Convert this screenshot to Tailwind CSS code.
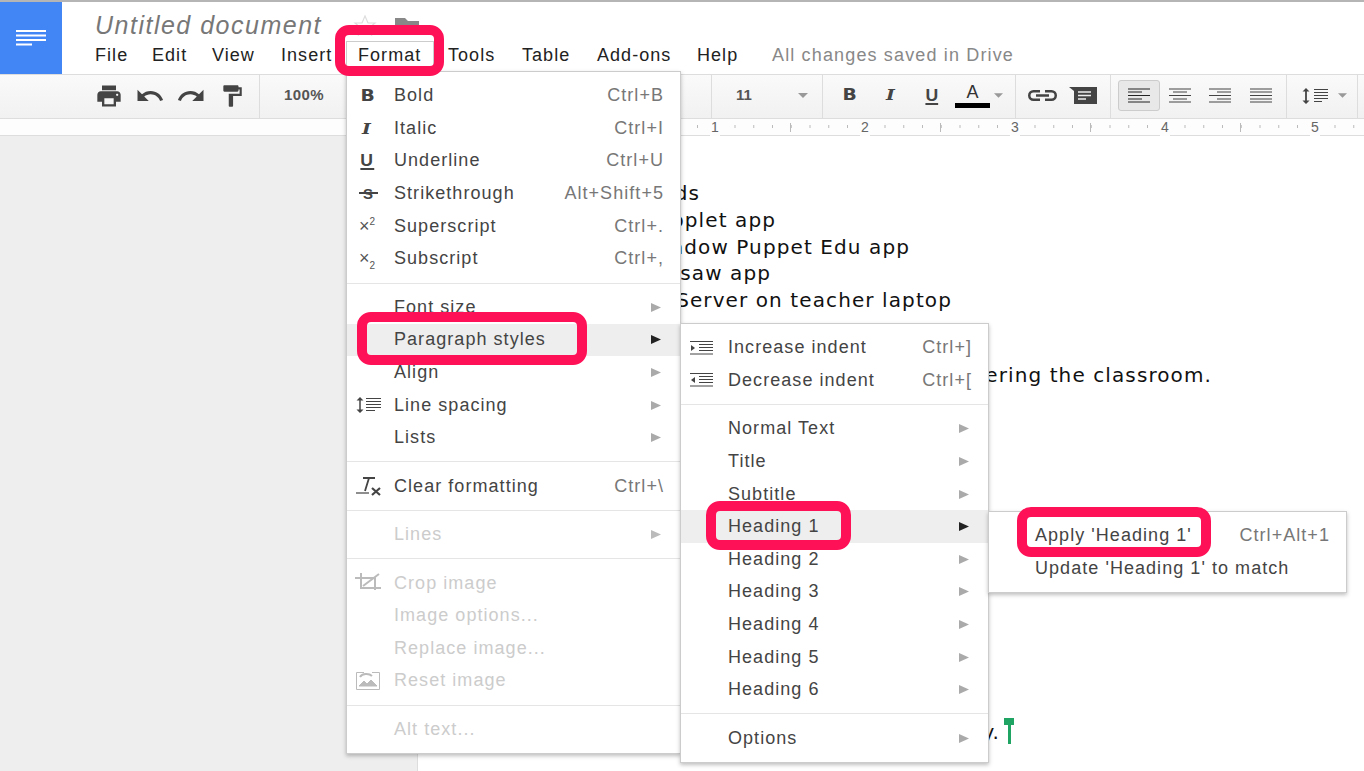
<!DOCTYPE html>
<html><head><meta charset="utf-8"><script src="https://cdn.jsdelivr.net/npm/@tailwindcss/browser@4"></script><title>Untitled document</title></head>
<body class="bg-white">
<div class="relative w-[1364px] h-[771px] overflow-hidden flex flex-col font-['Liberation_Sans',Arial,sans-serif] bg-white">
  <!-- header -->
  <header class="h-[75px] flex border-t-2 border-b border-t-[#b5b5b5] border-b-[#ddd] bg-white">
    <div class="w-[62px] bg-[#4285f4] flex items-center justify-center">
      <svg width="30" height="16" viewBox="0 0 30 16" fill="#fff"><rect width="30" height="2"/><rect y="4.500" width="30" height="2"/><rect y="9" width="30" height="2"/><rect y="13.500" width="16" height="2"/></svg>
    </div>
    <div class="flex-1 pl-[33px] flex flex-col">
      <div class="h-[38px] flex items-center pt-[10px]">
        <span class="w-[254px] text-[25px] italic tracking-[1.5px] text-[#777]">Untitled document</span>
        <svg class="ml-[4px]" width="24" height="24" viewBox="0 0 24 24" fill="none" stroke="#ddd" stroke-width="1.2"><path d="M12 2l3 7h7l-5.600 4.600 2 7.400L12 16.800 5.600 21l2-7.400L2 9h7z"/></svg>
        <svg class="ml-[17px]" width="26" height="22" viewBox="0 0 26 22" fill="#888"><path d="M1 3h10l3 3h11v14H1z"/></svg>
      </div>
      <nav class="flex items-center h-[30px] pt-[1px] text-[18px] tracking-[1.05px] text-[#222]">
        <span class="w-[57px]">File</span><span class="w-[60px]">Edit</span><span class="w-[69px]">View</span><span class="w-[65px]">Insert</span><span class="self-end w-[88px] h-[29px] mr-[14px] pl-[11px] pb-[2px] flex items-center bg-white border border-b-0 border-[#ccc]">Format</span><span class="w-[74px]">Tools</span><span class="w-[75px]">Table</span><span class="w-[100px]">Add-ons</span><span class="w-[75px]">Help</span><span class="text-[#888] tracking-[1.15px]">All changes saved in Drive</span>
      </nav>
    </div>
  </header>
  <!-- toolbar -->
  <div class="h-[44px] flex items-center border-b border-[#ddd] bg-gradient-to-b from-[#fafafa] to-[#f1f1f1] text-[#444]">
    <div class="w-[260px] h-full pl-[88px] pb-[2px] flex items-center border-r border-[#ddd]">
      <span class="w-[41px] flex justify-center"><svg width="28" height="28" viewBox="0 0 24 24" fill="#444"><path d="M19 8H5c-1.660 0-3 1.340-3 3v6h4v4h12v-4h4v-6c0-1.660-1.340-3-3-3zm-3 11H8v-5h8v5zm3-7c-.55 0-1-.45-1-1s.45-1 1-1 1 .45 1 1-.45 1-1 1zm-1-9H6v4h12V3z"/></svg></span>
      <span class="w-[41px] flex justify-center"><svg width="30" height="30" viewBox="0 0 24 24" fill="#444"><path d="M12.500 8c-2.650 0-5.050.99-6.900 2.600L2 7v9h9l-3.620-3.620c1.390-1.160 3.160-1.880 5.120-1.880 3.540 0 6.550 2.310 7.600 5.500l2.370-.78C21.080 11.030 17.150 8 12.500 8z"/></svg></span>
      <span class="w-[41px] flex justify-center"><svg width="30" height="30" viewBox="0 0 24 24" fill="#444" class="-scale-x-100"><path d="M12.500 8c-2.650 0-5.050.99-6.900 2.600L2 7v9h9l-3.620-3.620c1.390-1.160 3.160-1.880 5.120-1.880 3.540 0 6.550 2.310 7.600 5.500l2.370-.78C21.080 11.030 17.150 8 12.500 8z"/></svg></span>
      <span class="w-[41px] flex justify-center"><svg width="26" height="26" viewBox="0 0 24 24" fill="#444"><path d="M18 4V3c0-.55-.45-1-1-1H5c-.55 0-1 .45-1 1v4c0 .55.45 1 1 1h12c.55 0 1-.45 1-1V6h1v4H9v11c0 .55.45 1 1 1h2c.55 0 1-.45 1-1v-9h8V4h-3z"/></svg></span>
    </div>
    <div class="w-[452px] h-full pb-[2px] flex items-center border-r border-[#ddd]">
      <span class="ml-[24px] w-[65px] text-[15px] font-bold text-[#555] tracking-[0.4px]">100%</span>
      <svg class="ml-[295px]" width="10" height="5" viewBox="0 0 10 5" fill="#999"><path d="M0 0h10L5 5z"/></svg>
    </div>
    <div class="w-[111px] h-full pb-[2px] flex items-center border-r border-[#ddd]">
      <span class="ml-[24px] w-[62px] text-[15px] font-bold text-[#555]">11</span>
      <svg width="10" height="5" viewBox="0 0 10 5" fill="#999"><path d="M0 0h10L5 5z"/></svg>
    </div>
    <div class="w-[193px] h-full pl-[6px] pb-[2px] flex items-center border-r border-[#ddd]">
      <span class="w-[41px] flex justify-center"><span class="inline-block text-[15px] font-bold scale-x-125 font-['DejaVu_Sans',sans-serif]">B</span></span>
      <span class="w-[41px] flex justify-center"><span class="inline-block text-[15px] font-bold italic scale-x-125 font-['DejaVu_Serif',serif]">I</span></span>
      <span class="w-[41px] flex justify-center"><span class="inline-block text-[16px] font-bold underline underline-offset-2 decoration-2 scale-x-110">U</span></span>
      <span class="w-[41px] flex flex-col items-center"><span class="text-[18px] leading-[19px] text-[#333]">A</span><span class="w-[35px] h-[5px] mt-[1px] bg-black shrink-0"></span></span>
      <svg class="ml-[1px]" width="9" height="5" viewBox="0 0 10 5" fill="#999"><path d="M0 0h10L5 5z"/></svg>
    </div>
    <div class="w-[95px] h-full pl-[12px] pb-[2px] flex items-center border-r border-[#ddd]">
      <svg width="29" height="11" viewBox="0 0 29 11" fill="none" stroke="#444" stroke-width="2.500"><path d="M12 1.250H5.500a4.250 4.250 0 0 0 0 8.500H12M17 1.250h6.500a4.250 4.250 0 0 1 0 8.500H17M8 5.500h13"/></svg>
      <svg class="ml-[12px]" width="28" height="17" viewBox="0 0 28 17"><path d="M0 0h28v17H5V4z" fill="#444"/><path d="M9 5h13M9 8.500h13M9 12h8" stroke="#eee" stroke-width="1.600"/></svg>
    </div>
    <div class="w-[176px] h-full pl-[7px] pb-[2px] flex items-center border-r border-[#ddd]">
      <span class="w-[42px] h-[31px] flex items-center justify-center bg-[#e8e8e8] border border-[#ccc] rounded-[3px]">
        <svg width="22" height="15" viewBox="0 0 22 15" stroke="#222" stroke-width="1.200"><path d="M0 1h22M0 4h14M0 7.500h22M0 11h14M0 14h22"/></svg></span>
      <span class="w-[40px] flex justify-center"><svg width="22" height="15" viewBox="0 0 22 15" stroke="#444" stroke-width="1.200"><path d="M0 1h22M4 4h14M0 7.500h22M4 11h14M0 14h22"/></svg></span>
      <span class="w-[40px] flex justify-center"><svg width="22" height="15" viewBox="0 0 22 15" stroke="#444" stroke-width="1.200"><path d="M0 1h22M8 4h14M0 7.500h22M8 11h14M0 14h22"/></svg></span>
      <span class="w-[41px] flex justify-center"><svg width="22" height="15" viewBox="0 0 22 15" stroke="#444" stroke-width="1.200"><path d="M0 1h22M0 4h22M0 7.500h22M0 11h22M0 14h22"/></svg></span>
    </div>
    <div class="w-[71px] h-full pl-[15px] pb-[2px] flex items-center border-r border-[#ddd]">
      <svg width="27" height="16" viewBox="0 0 27 16" fill="none" stroke="#444"><path d="M4 2v12" stroke-width="1.800"/><path d="M0.500 3.500L4 0l3.500 3.500zM0.500 12.500L4 16l3.500-3.500z" fill="#444" stroke="none"/><path d="M12 1.500h14M12 4.500h14M12 7.500h14M12 10.500h14M12 13.500h8" stroke-width="1.100"/></svg>
      <svg class="ml-[9px]" width="9" height="5" viewBox="0 0 10 5" fill="#999"><path d="M0 0h10L5 5z"/></svg>
    </div>
  </div>
  <!-- ruler -->
  <div class="relative h-[17px] border-b border-[#ddd] bg-[#fdfdfd] text-[14px] leading-[17px] text-[#666]">
    <svg class="absolute inset-0" width="1364" height="16" viewBox="0 0 1364 16"><line x1="697" x2="1364" y1="7.500" y2="7.500" stroke="#bbb" stroke-width="3" stroke-dasharray="1 17.750"/><line x1="790" x2="1364" y1="8.500" y2="8.500" stroke="#bbb" stroke-width="9" stroke-dasharray="1 149"/></svg>
    <span class="absolute left-[710px] top-0 px-[1px] bg-[#fdfdfd]">1</span><span class="absolute left-[860px] top-0 px-[1px] bg-[#fdfdfd]">2</span><span class="absolute left-[1010px] top-0 px-[1px] bg-[#fdfdfd]">3</span><span class="absolute left-[1160px] top-0 px-[1px] bg-[#fdfdfd]">4</span><span class="absolute left-[1310px] top-0 px-[1px] bg-[#fdfdfd]">5</span>
  </div>
  <!-- canvas -->
  <main class="flex-1 flex bg-[#eee]">
    <div class="w-[417px]"></div>
    <div class="flex-1 bg-white border-l border-[#ddd] pt-[44px] text-[20px] tracking-[1.1px] leading-[26.750px] text-[#111] font-['DejaVu_Sans',sans-serif]">
      <div class="w-[282px] text-right">iPads</div>
      <div class="w-[358px] text-right">Popplet app</div>
      <div class="w-[492px] text-right">Shadow Puppet Edu app</div>
      <div class="w-[353px] text-right">Jigsaw app</div>
      <div class="w-[534px] text-right">Nearpod Server on teacher laptop</div>
      <div class="w-[794px] text-right mt-[48px]">entering the classroom.</div>
      <div class="w-[582px] text-right mt-[330px]">y.</div>
    </div>
  </main>
  <!-- text cursor -->
  <div class="absolute left-[1004px] top-[718px] flex flex-col items-center w-[10px]"><span class="w-[10px] h-[7px] bg-[#1fa463]"></span><span class="w-[3px] h-[19px] bg-[#1fa463]"></span></div>

  <!-- Format menu -->
  <div class="absolute left-[346px] top-[71px] w-[335px] py-[7.500px] bg-white border border-[#ccc] shadow-[0_2px_4px_rgba(0,0,0,0.25)] text-[18px] tracking-[1.05px] text-[#444]">
    <div class="h-[32.600px] flex items-center"><span class="w-[47px] pl-[15px]"><span class="inline-block text-[15px] font-bold scale-x-125 font-['DejaVu_Sans',sans-serif]">B</span></span><span class="flex-1">Bold</span><span class="pr-[16px] text-[#777]">Ctrl+B</span></div>
    <div class="h-[32.600px] flex items-center"><span class="w-[47px] pl-[16px]"><span class="inline-block text-[15px] font-bold italic scale-x-125 font-['DejaVu_Serif',serif]">I</span></span><span class="flex-1">Italic</span><span class="pr-[16px] text-[#777]">Ctrl+I</span></div>
    <div class="h-[32.600px] flex items-center"><span class="w-[47px] pl-[14px]"><span class="inline-block text-[16px] font-bold underline underline-offset-2 decoration-2 scale-x-110">U</span></span><span class="flex-1">Underline</span><span class="pr-[16px] text-[#777]">Ctrl+U</span></div>
    <div class="h-[32.600px] flex items-center"><span class="w-[47px] pl-[16px]"><span class="relative inline-block text-[15px] font-bold">S<span class="absolute left-[-4px] right-[-4px] top-[9px] h-[1.500px] bg-[#444]"></span></span></span><span class="flex-1">Strikethrough</span><span class="pr-[16px] text-[#777]">Alt+Shift+5</span></div>
    <div class="h-[32.600px] flex items-center"><span class="w-[47px] pl-[12px] text-[18px] tracking-normal text-[#555]">×<span class="text-[10px] align-super leading-none">2</span></span><span class="flex-1">Superscript</span><span class="pr-[16px] text-[#777]">Ctrl+.</span></div>
    <div class="h-[32.600px] flex items-center"><span class="w-[47px] pl-[12px] text-[18px] tracking-normal text-[#555]">×<span class="text-[10px] align-sub leading-none">2</span></span><span class="flex-1">Subscript</span><span class="pr-[16px] text-[#777]">Ctrl+,</span></div>
    <div class="h-px my-[7.450px] bg-[#e5e5e5]"></div>
    <div class="h-[32.600px] flex items-center"><span class="w-[47px]"></span><span class="flex-1">Font size</span><svg class="mr-[19px]" width="10" height="9" viewBox="0 0 10 9" fill="#aaa"><path d="M0 0l10 4.500L0 9z"/></svg></div>
    <div class="h-[32.600px] flex items-center bg-[#eee]"><span class="w-[47px]"></span><span class="flex-1">Paragraph styles</span><svg class="mr-[19px]" width="10" height="9" viewBox="0 0 10 9" fill="#222"><path d="M0 0l10 4.500L0 9z"/></svg></div>
    <div class="h-[32.600px] flex items-center"><span class="w-[47px]"></span><span class="flex-1">Align</span><svg class="mr-[19px]" width="10" height="9" viewBox="0 0 10 9" fill="#aaa"><path d="M0 0l10 4.500L0 9z"/></svg></div>
    <div class="h-[32.600px] flex items-center"><span class="w-[47px] pl-[9px]"><svg width="26" height="16" viewBox="0 0 26 16" fill="none" stroke="#444"><path d="M4 2v12" stroke-width="1.500"/><path d="M0.500 3.500L4 0l3.500 3.500zM0.500 12.500L4 16l3.500-3.500z" fill="#444" stroke="none"/><path d="M10 1.500h15M10 4.500h15M10 7.500h15M10 10.500h15M10 13.500h9"/></svg></span><span class="flex-1">Line spacing</span><svg class="mr-[19px]" width="10" height="9" viewBox="0 0 10 9" fill="#aaa"><path d="M0 0l10 4.500L0 9z"/></svg></div>
    <div class="h-[32.600px] flex items-center"><span class="w-[47px]"></span><span class="flex-1">Lists</span><svg class="mr-[19px]" width="10" height="9" viewBox="0 0 10 9" fill="#aaa"><path d="M0 0l10 4.500L0 9z"/></svg></div>
    <div class="h-px my-[7.450px] bg-[#e5e5e5]"></div>
    <div class="h-[32.600px] flex items-center"><span class="w-[47px] pl-[9px]"><svg width="26" height="20" viewBox="0 0 26 20" fill="none" stroke="#444"><path d="M7 2h12M13 2L9 15" stroke-width="1.800"/><path d="M0 17h13" stroke-width="1.200"/><path d="M16 12l8 7M24 12l-8 7" stroke-width="2.200"/></svg></span><span class="flex-1">Clear formatting</span><span class="pr-[16px] text-[#777]">Ctrl+\</span></div>
    <div class="h-px my-[7.450px] bg-[#e5e5e5]"></div>
    <div class="h-[32.600px] flex items-center text-[#ccc]"><span class="w-[47px]"></span><span class="flex-1">Lines</span><svg class="mr-[19px]" width="10" height="9" viewBox="0 0 10 9" fill="#bbb"><path d="M0 0l10 4.500L0 9z"/></svg></div>
    <div class="h-px my-[7.450px] bg-[#e5e5e5]"></div>
    <div class="h-[32.600px] flex items-center text-[#ccc]"><span class="w-[47px] pl-[8px]"><svg width="26" height="20" viewBox="0 0 26 20" fill="none" stroke="#bbb" stroke-width="2"><path d="M0 5h20v12M6 0v15h20M24 1L8 13"/></svg></span><span class="flex-1">Crop image</span></div>
    <div class="h-[32.600px] flex items-center text-[#ccc]"><span class="w-[47px]"></span><span class="flex-1">Image options...</span></div>
    <div class="h-[32.600px] flex items-center text-[#ccc]"><span class="w-[47px]"></span><span class="flex-1">Replace image...</span></div>
    <div class="h-[32.600px] flex items-center text-[#ccc]"><span class="w-[47px] pl-[9px]"><svg width="24" height="18" viewBox="0 0 24 18" fill="none" stroke="#bbb"><path d="M8 .5H.5v17h23V.5H16"/><path d="M3 14l5-5 3 3 4-4 6 6z" fill="#bbb"/><path d="M4 5a7 5 0 0 1 12-1" stroke-width="2"/></svg></span><span class="flex-1">Reset image</span></div>
    <div class="h-px my-[7.450px] bg-[#e5e5e5]"></div>
    <div class="h-[32.600px] flex items-center text-[#ccc]"><span class="w-[47px]"></span><span class="flex-1">Alt text...</span></div>
  </div>

  <!-- Paragraph styles submenu -->
  <div class="absolute left-[680px] top-[323px] w-[309px] py-[7.500px] bg-white border border-[#ccc] shadow-[0_2px_4px_rgba(0,0,0,0.25)] text-[18px] tracking-[1.05px] text-[#444]">
    <div class="h-[32.600px] flex items-center"><span class="w-[47px] pl-[9px]"><svg width="23" height="14" viewBox="0 0 23 14" stroke="#444" fill="#444"><path d="M0 .5h23M9 3.500h14M9 6.500h14M9 9.500h14M0 13h23"/><path d="M1 4l4 3-4 3z" stroke="none"/></svg></span><span class="flex-1">Increase indent</span><span class="pr-[16px] text-[#777]">Ctrl+]</span></div>
    <div class="h-[32.600px] flex items-center"><span class="w-[47px] pl-[9px]"><svg width="23" height="14" viewBox="0 0 23 14" stroke="#444" fill="#444"><path d="M0 .5h23M9 3.500h14M9 6.500h14M9 9.500h14M0 13h23"/><path d="M5 4L1 7l4 3z" stroke="none"/></svg></span><span class="flex-1">Decrease indent</span><span class="pr-[16px] text-[#777]">Ctrl+[</span></div>
    <div class="h-px my-[7.450px] bg-[#e5e5e5]"></div>
    <div class="h-[32.600px] flex items-center"><span class="w-[47px]"></span><span class="flex-1">Normal Text</span><svg class="mr-[19px]" width="10" height="9" viewBox="0 0 10 9" fill="#aaa"><path d="M0 0l10 4.500L0 9z"/></svg></div>
    <div class="h-[32.600px] flex items-center"><span class="w-[47px]"></span><span class="flex-1">Title</span><svg class="mr-[19px]" width="10" height="9" viewBox="0 0 10 9" fill="#aaa"><path d="M0 0l10 4.500L0 9z"/></svg></div>
    <div class="h-[32.600px] flex items-center"><span class="w-[47px]"></span><span class="flex-1">Subtitle</span><svg class="mr-[19px]" width="10" height="9" viewBox="0 0 10 9" fill="#aaa"><path d="M0 0l10 4.500L0 9z"/></svg></div>
    <div class="h-[32.600px] flex items-center bg-[#eee]"><span class="w-[47px]"></span><span class="flex-1">Heading 1</span><svg class="mr-[19px]" width="10" height="9" viewBox="0 0 10 9" fill="#222"><path d="M0 0l10 4.500L0 9z"/></svg></div>
    <div class="h-[32.600px] flex items-center"><span class="w-[47px]"></span><span class="flex-1">Heading 2</span><svg class="mr-[19px]" width="10" height="9" viewBox="0 0 10 9" fill="#aaa"><path d="M0 0l10 4.500L0 9z"/></svg></div>
    <div class="h-[32.600px] flex items-center"><span class="w-[47px]"></span><span class="flex-1">Heading 3</span><svg class="mr-[19px]" width="10" height="9" viewBox="0 0 10 9" fill="#aaa"><path d="M0 0l10 4.500L0 9z"/></svg></div>
    <div class="h-[32.600px] flex items-center"><span class="w-[47px]"></span><span class="flex-1">Heading 4</span><svg class="mr-[19px]" width="10" height="9" viewBox="0 0 10 9" fill="#aaa"><path d="M0 0l10 4.500L0 9z"/></svg></div>
    <div class="h-[32.600px] flex items-center"><span class="w-[47px]"></span><span class="flex-1">Heading 5</span><svg class="mr-[19px]" width="10" height="9" viewBox="0 0 10 9" fill="#aaa"><path d="M0 0l10 4.500L0 9z"/></svg></div>
    <div class="h-[32.600px] flex items-center"><span class="w-[47px]"></span><span class="flex-1">Heading 6</span><svg class="mr-[19px]" width="10" height="9" viewBox="0 0 10 9" fill="#aaa"><path d="M0 0l10 4.500L0 9z"/></svg></div>
    <div class="h-px my-[7.450px] bg-[#e5e5e5]"></div>
    <div class="h-[32.600px] flex items-center"><span class="w-[47px]"></span><span class="flex-1">Options</span><svg class="mr-[19px]" width="10" height="9" viewBox="0 0 10 9" fill="#aaa"><path d="M0 0l10 4.500L0 9z"/></svg></div>
  </div>

  <!-- Heading 1 submenu -->
  <div class="absolute left-[988px] top-[511px] w-[359px] h-[82px] py-[7.500px] bg-white border border-[#ccc] shadow-[0_2px_4px_rgba(0,0,0,0.25)] text-[18px] tracking-[1.05px] text-[#444]">
    <div class="h-[32.600px] flex items-center pl-[46px]"><span class="flex-1">Apply 'Heading 1'</span><span class="pr-[16px] text-[#777]">Ctrl+Alt+1</span></div>
    <div class="h-[32.600px] flex items-center pl-[46px]"><span class="flex-1">Update 'Heading 1' to match</span></div>
  </div>

  <!-- annotation outlines -->
  <div class="absolute left-[335px] top-[25px] w-[109px] h-[51px] border-[10px] border-[#ff1158] rounded-[14px]"></div>
  <div class="absolute left-[357px] top-[312px] w-[230px] h-[53px] border-[10px] border-[#ff1158] rounded-[14px]"></div>
  <div class="absolute left-[706px] top-[501px] w-[145px] h-[49px] border-[10px] border-[#ff1158] rounded-[14px]"></div>
  <div class="absolute left-[1017px] top-[507px] w-[194px] h-[50px] border-[10px] border-[#ff1158] rounded-[14px]"></div>
</div>
</body></html>
